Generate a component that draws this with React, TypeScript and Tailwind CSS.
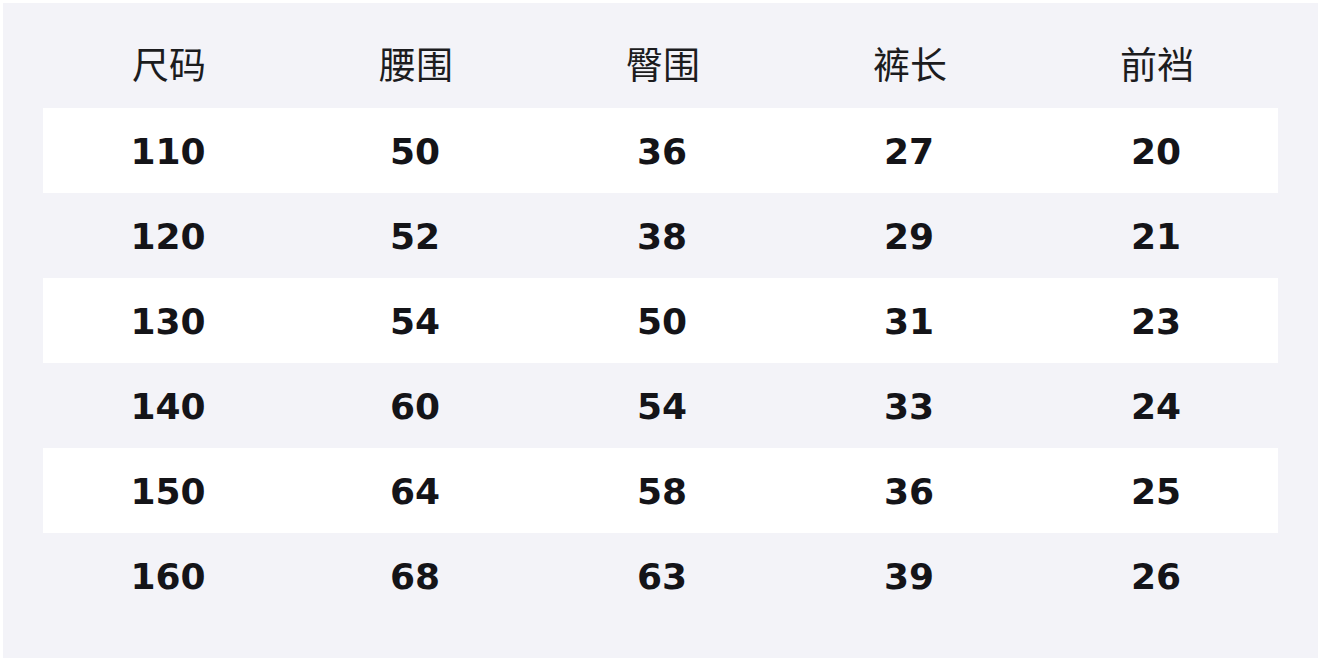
import React from "react";

const headers = ["尺码", "腰围", "臀围", "裤长", "前裆"];
const rows = [
  ["110", "50", "36", "27", "20"],
  ["120", "52", "38", "29", "21"],
  ["130", "54", "50", "31", "23"],
  ["140", "60", "54", "33", "24"],
  ["150", "64", "58", "36", "25"],
  ["160", "68", "63", "39", "26"],
];

export default function App() {
  return (
    <div className="w-[1322px] h-[663px] bg-white p-[3px] pr-[4px] pb-[5px]">
      <div
        className="w-full h-full bg-[#f3f3f8] px-[40px] pt-[20px]"
        style={{ fontFamily: '"DejaVu Sans", "Noto Sans CJK SC", sans-serif' }}
      >
        <div className="grid grid-cols-5 h-[85px] items-center pb-[4px] text-[37px] text-[#1c1c1e] leading-none">
          {headers.map((h) => (
            <div key={h} className="text-center pl-[5px]" style={{ fontFamily: '"Noto Sans CJK SC", sans-serif' }}>
              {h}
            </div>
          ))}
        </div>
        {rows.map((r, i) => (
          <div
            key={i}
            className={`grid grid-cols-5 h-[85px] items-center pt-[2px] text-[36px] font-bold text-[#141418] leading-none ${
              i % 2 === 0 ? "bg-white" : ""
            }`}
          >
            {r.map((c, j) => (
              <div key={j} className="text-center pl-[3px]">
                {c}
              </div>
            ))}
          </div>
        ))}
      </div>
    </div>
  );
}
